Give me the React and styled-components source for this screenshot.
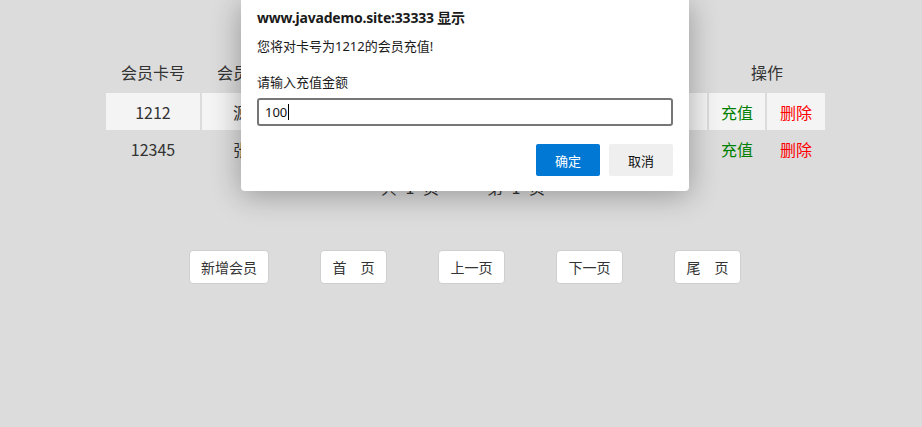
import React from "react";
import styled, { createGlobalStyle } from "styled-components";

const Global = createGlobalStyle`
  html, body { margin: 0; padding: 0; background: #dcdcdc; }
  body { font-family: "Microsoft YaHei", "Noto Sans CJK SC", "Noto Sans", sans-serif; color: #333; }
`;

const Page = styled.div`
  position: relative;
  width: 922px;
  height: 427px;
  overflow: hidden;
  background: #dcdcdc;
  padding-top: 51px;
  box-sizing: border-box;
`;

const Table = styled.table`
  margin-left: 104px;
  width: 723px;
  border-collapse: separate;
  border-spacing: 2px;
  table-layout: fixed;
  font-size: 16px;
`;

const Col = styled.col`
  width: ${(p) => p.$w}px;
`;

const Th = styled.th`
  font-weight: normal;
  height: 38px;
  padding: 0;
  text-align: center;
  color: #333;
  line-height: 20px;
`;

const Tr = styled.tr`
  background: ${(p) => (p.$hl ? "#f4f4f4" : "transparent")};
`;

const Td = styled.td`
  height: ${(p) => (p.$short ? 34 : 37)}px;
  padding: 0;
  text-align: center;
  line-height: 20px;
  white-space: nowrap;
  overflow: hidden;
  color: ${(p) => p.$color || "#333"};
`;

const Pager = styled.div`
  display: flex;
  justify-content: center;
  gap: 48px;
  margin-top: 9px;
  margin-left: 4px;
  font-size: 16px;
  line-height: 20px;
  color: #333;
`;

const PagerItem = styled.span`
  word-spacing: 5px;
`;

const ButtonRow = styled.div`
  display: flex;
  justify-content: center;
  gap: 51px;
  margin-top: 53px;
  margin-left: 8px;
`;

const PageButton = styled.button`
  width: ${(p) => p.$w}px;
  height: 34px;
  background: #fff;
  border: 1px solid #cfcfcf;
  border-radius: 4px;
  font-family: "Microsoft YaHei", "Noto Sans CJK SC", sans-serif;
  font-size: 14px;
  color: #333;
  padding: 0;
  white-space: pre;
`;

const Dialog = styled.div`
  position: absolute;
  left: 241px;
  top: 0;
  width: 448px;
  box-sizing: border-box;
  padding: 8px 16px 15px;
  background: #fff;
  border-radius: 0 0 4px 4px;
  box-shadow: 0 4px 30px rgba(0, 0, 0, 0.32);
  font-family: "Segoe UI", "Noto Sans", "Noto Sans CJK SC", sans-serif;
  color: #1a1a1a;
`;

const Title = styled.div`
  font-size: 14px;
  font-weight: 700;
  line-height: 20px;
  letter-spacing: -0.2px;
`;

const Message = styled.div`
  font-size: 13px;
  line-height: 20px;
  margin-top: ${(p) => p.$mt}px;
`;

const FakeInput = styled.div`
  margin-top: 6px;
  height: 28px;
  box-sizing: border-box;
  border: 2px solid #767676;
  border-radius: 3px;
  padding: 0 6px;
  display: flex;
  align-items: center;
  font-size: 13px;
  color: #111;
`;

const Caret = styled.span`
  display: inline-block;
  width: 1px;
  height: 16px;
  background: #000;
  margin-left: 1px;
`;

const Actions = styled.div`
  display: flex;
  justify-content: flex-end;
  gap: 9px;
  margin-top: 18px;
`;

const DialogButton = styled.button`
  width: 64px;
  height: 32px;
  border: none;
  border-radius: 2px;
  font-family: "Segoe UI", "Noto Sans CJK SC", sans-serif;
  font-size: 13px;
  background: ${(p) => (p.$primary ? "#0078d4" : "#efefef")};
  color: ${(p) => (p.$primary ? "#fff" : "#111")};
  padding: 0;
`;

const widths = [94, 94, 150, 100, 155, 56, 58];

export default function App() {
  return (
    <Page>
      <Global />
      <Table>
        <colgroup>
          {widths.map((w, i) => (
            <Col key={i} $w={w} />
          ))}
        </colgroup>
        <thead>
          <tr>
            <Th>会员卡号</Th>
            <Th>会员姓名</Th>
            <Th>联系电话</Th>
            <Th>会员积分</Th>
            <Th>会员余额</Th>
            <Th colSpan={2}>操作</Th>
          </tr>
        </thead>
        <tbody>
          <Tr $hl>
            <Td>1212</Td>
            <Td>源码</Td>
            <Td>13800000000</Td>
            <Td>0</Td>
            <Td>0.0</Td>
            <Td $color="#008000">充值</Td>
            <Td $color="#ff0000">删除</Td>
          </Tr>
          <Tr>
            <Td $short>12345</Td>
            <Td $short>张三</Td>
            <Td $short>13900000000</Td>
            <Td $short>0</Td>
            <Td $short>0.0</Td>
            <Td $short $color="#008000">充值</Td>
            <Td $short $color="#ff0000">删除</Td>
          </Tr>
        </tbody>
      </Table>
      <Pager>
        <PagerItem>共 1 页</PagerItem>
        <PagerItem>第 1 页</PagerItem>
      </Pager>
      <ButtonRow>
        <PageButton $w={80}>新增会员</PageButton>
        <PageButton $w={67}>首　页</PageButton>
        <PageButton $w={67}>上一页</PageButton>
        <PageButton $w={67}>下一页</PageButton>
        <PageButton $w={67}>尾　页</PageButton>
      </ButtonRow>
      <Dialog>
        <Title>www.javademo.site:33333 显示</Title>
        <Message $mt={8}>您将对卡号为1212的会员充值!</Message>
        <Message $mt={16}>请输入充值金额</Message>
        <FakeInput>
          100
          <Caret />
        </FakeInput>
        <Actions>
          <DialogButton $primary>确定</DialogButton>
          <DialogButton>取消</DialogButton>
        </Actions>
      </Dialog>
    </Page>
  );
}
